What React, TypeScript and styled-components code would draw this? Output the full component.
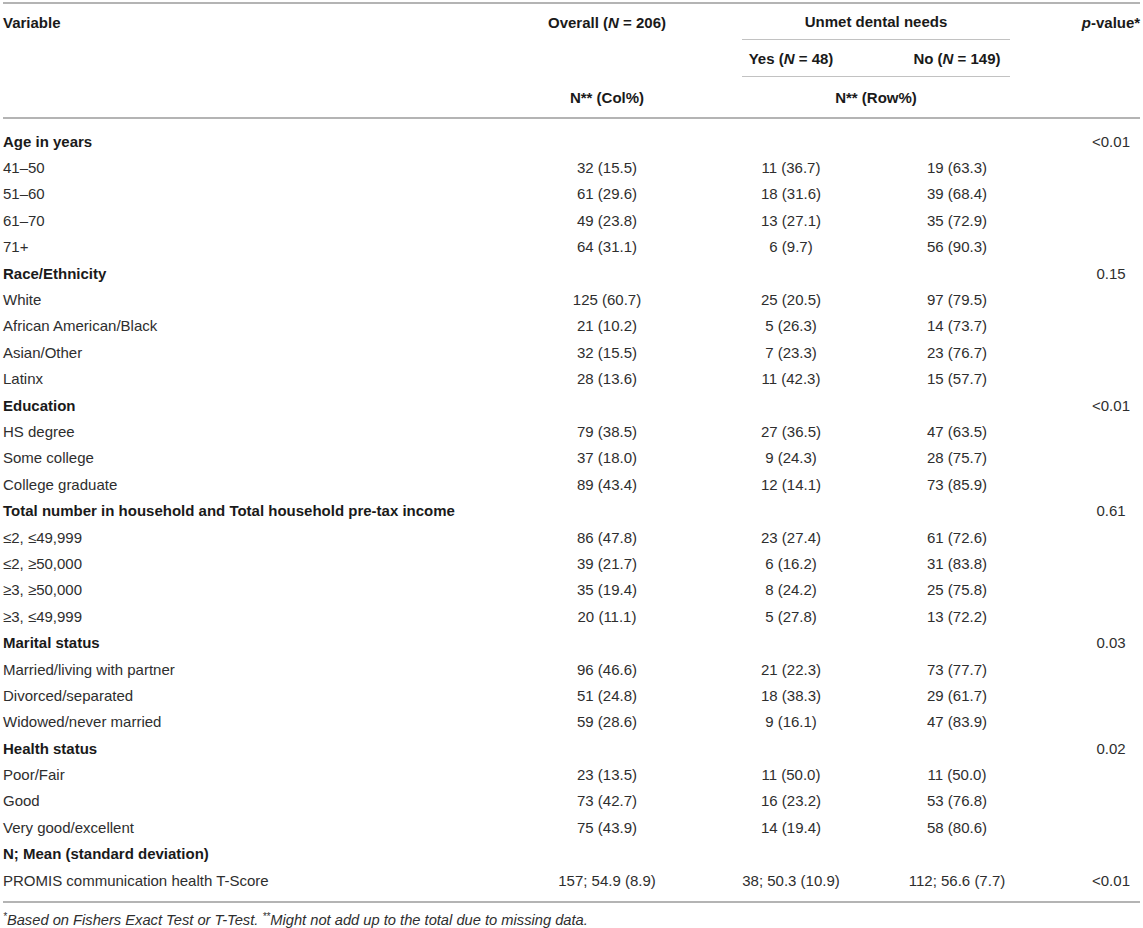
import React from "react";
import styled, { createGlobalStyle } from "styled-components";

const GlobalStyle = createGlobalStyle`
  html, body { margin: 0; padding: 0; background: #ffffff; }
  body { font-family: "Liberation Sans", Arial, sans-serif; }
`;

const COLS = "517px 174px 48px 98px 64px 106px 72px 58px";

const Page = styled.div`
  padding: 2px 3px 0 3px;
  width: 1137px;
  font-family: "Liberation Sans", Arial, sans-serif;
  font-size: 15px;
  color: #2e2e2e;
`;

const Table = styled.div`
  border-top: 2px solid #b4b4b4;
  border-bottom: 2px solid #b4b4b4;
`;

const Head = styled.div`
  display: grid;
  grid-template-columns: ${COLS};
  grid-template-rows: 36px 37px 40px;
  border-bottom: 2px solid #b4b4b4;
  font-weight: bold;
  color: #1a1a1a;
`;

const HeadCell = styled.div<{ $col: string; $row: string; $align?: string }>`
  grid-column: ${(p) => p.$col};
  grid-row: ${(p) => p.$row};
  display: flex;
  align-items: center;
  justify-content: ${(p) => p.$align || "center"};
  white-space: nowrap;
`;

const SpanHead = styled.div<{ $row: string; $line?: boolean }>`
  grid-column: 4 / 7;
  grid-row: ${(p) => p.$row};
  display: flex;
  align-items: center;
  justify-content: center;
  box-sizing: border-box;
  border-bottom: ${(p) => (p.$line ? "1px solid #c2c2c2" : "none")};
  white-space: nowrap;
`;

const SubHead = styled.div`
  grid-column: 4 / 7;
  grid-row: 2;
  display: grid;
  grid-template-columns: 98px 64px 106px;
  box-sizing: border-box;
  border-bottom: 1px solid #c2c2c2;
`;

const SubCell = styled.div<{ $col: number }>`
  grid-column: ${(p) => p.$col};
  display: flex;
  align-items: center;
  justify-content: center;
  white-space: nowrap;
`;

const Body = styled.div`
  padding: 9px 0 8px 0;
`;

const Row = styled.div`
  display: grid;
  grid-template-columns: ${COLS};
  height: 26.4px;
  align-items: center;
`;

const Label = styled.div<{ $bold?: boolean }>`
  grid-column: 1;
  white-space: nowrap;
  font-weight: ${(p) => (p.$bold ? "bold" : "normal")};
  color: ${(p) => (p.$bold ? "#1a1a1a" : "#2e2e2e")};
`;

const Val = styled.div<{ $col: number }>`
  grid-column: ${(p) => p.$col};
  display: flex;
  justify-content: center;
  white-space: nowrap;
`;

const Note = styled.div`
  margin-top: 8px;
  font-size: 14.7px;
  font-style: italic;
  line-height: 18px;
  color: #2e2e2e;
  sup { font-size: 10px; vertical-align: 5px; line-height: 0; }
`;

type R = { label: string; bold?: boolean; vals?: [string, string, string]; p?: string };

const rows: R[] = [
  { label: "Age in years", bold: true, p: "<0.01" },
  { label: "41–50", vals: ["32 (15.5)", "11 (36.7)", "19 (63.3)"] },
  { label: "51–60", vals: ["61 (29.6)", "18 (31.6)", "39 (68.4)"] },
  { label: "61–70", vals: ["49 (23.8)", "13 (27.1)", "35 (72.9)"] },
  { label: "71+", vals: ["64 (31.1)", "6 (9.7)", "56 (90.3)"] },
  { label: "Race/Ethnicity", bold: true, p: "0.15" },
  { label: "White", vals: ["125 (60.7)", "25 (20.5)", "97 (79.5)"] },
  { label: "African American/Black", vals: ["21 (10.2)", "5 (26.3)", "14 (73.7)"] },
  { label: "Asian/Other", vals: ["32 (15.5)", "7 (23.3)", "23 (76.7)"] },
  { label: "Latinx", vals: ["28 (13.6)", "11 (42.3)", "15 (57.7)"] },
  { label: "Education", bold: true, p: "<0.01" },
  { label: "HS degree", vals: ["79 (38.5)", "27 (36.5)", "47 (63.5)"] },
  { label: "Some college", vals: ["37 (18.0)", "9 (24.3)", "28 (75.7)"] },
  { label: "College graduate", vals: ["89 (43.4)", "12 (14.1)", "73 (85.9)"] },
  { label: "Total number in household and Total household pre-tax income", bold: true, p: "0.61" },
  { label: "≤2, ≤49,999", vals: ["86 (47.8)", "23 (27.4)", "61 (72.6)"] },
  { label: "≤2, ≥50,000", vals: ["39 (21.7)", "6 (16.2)", "31 (83.8)"] },
  { label: "≥3, ≥50,000", vals: ["35 (19.4)", "8 (24.2)", "25 (75.8)"] },
  { label: "≥3, ≤49,999", vals: ["20 (11.1)", "5 (27.8)", "13 (72.2)"] },
  { label: "Marital status", bold: true, p: "0.03" },
  { label: "Married/living with partner", vals: ["96 (46.6)", "21 (22.3)", "73 (77.7)"] },
  { label: "Divorced/separated", vals: ["51 (24.8)", "18 (38.3)", "29 (61.7)"] },
  { label: "Widowed/never married", vals: ["59 (28.6)", "9 (16.1)", "47 (83.9)"] },
  { label: "Health status", bold: true, p: "0.02" },
  { label: "Poor/Fair", vals: ["23 (13.5)", "11 (50.0)", "11 (50.0)"] },
  { label: "Good", vals: ["73 (42.7)", "16 (23.2)", "53 (76.8)"] },
  { label: "Very good/excellent", vals: ["75 (43.9)", "14 (19.4)", "58 (80.6)"] },
  { label: "N; Mean (standard deviation)", bold: true },
  {
    label: "PROMIS communication health T-Score",
    vals: ["157; 54.9 (8.9)", "38; 50.3 (10.9)", "112; 56.6 (7.7)"],
    p: "<0.01",
  },
];

export default function App() {
  return (
    <>
      <GlobalStyle />
      <Page>
        <Table>
          <Head>
            <HeadCell $col="1" $row="1" $align="flex-start">Variable</HeadCell>
            <HeadCell $col="2" $row="1">
              Overall (<i>N</i>&nbsp;=&nbsp;206)
            </HeadCell>
            <SpanHead $row="1" $line>Unmet dental needs</SpanHead>
            <HeadCell $col="8" $row="1">
              <i>p</i>-value*
            </HeadCell>
            <SubHead>
              <SubCell $col={1}>
                Yes (<i>N</i>&nbsp;=&nbsp;48)
              </SubCell>
              <SubCell $col={3}>
                No (<i>N</i>&nbsp;=&nbsp;149)
              </SubCell>
            </SubHead>
            <HeadCell $col="2" $row="3">N** (Col%)</HeadCell>
            <SpanHead $row="3">N** (Row%)</SpanHead>
          </Head>
          <Body>
            {rows.map((r, i) => (
              <Row key={i}>
                <Label $bold={r.bold}>{r.label}</Label>
                {r.vals && (
                  <>
                    <Val $col={2}>{r.vals[0]}</Val>
                    <Val $col={4}>{r.vals[1]}</Val>
                    <Val $col={6}>{r.vals[2]}</Val>
                  </>
                )}
                {r.p && <Val $col={8}>{r.p}</Val>}
              </Row>
            ))}
          </Body>
        </Table>
        <Note>
          <sup>*</sup>Based on Fishers Exact Test or T-Test. <sup>**</sup>Might not add up to the total due to missing data.
        </Note>
      </Page>
    </>
  );
}
